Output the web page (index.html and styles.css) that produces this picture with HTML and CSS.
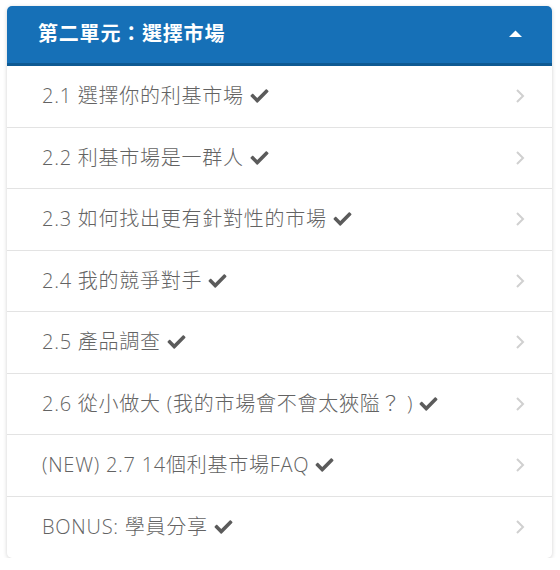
FILE: index.html
```html
<!DOCTYPE html>
<html lang="zh-Hant">
<head>
<meta charset="utf-8">
<link rel="stylesheet" href="styles.css">
</head>
<body>
<div class="card">
  <div class="header">
    <span class="title">第二單元：選擇市場</span>
    <svg class="caret" width="13" height="7" viewBox="0 0 13 7"><path d="M0 7 L6.5 0.5 L13 7 Z" fill="#fff"/></svg>
  </div>
  <ul class="list">
    <li class="row"><span class="label">2.1 選擇你的利基市場</span><svg class="check" viewBox="0 0 512 512"><path d="M173.9 439.4l-166.4-166.4c-10-10-10-26.2 0-36.2l36.2-36.2c10-10 26.2-10 36.2 0L192 312.7 432.1 72.6c10-10 26.2-10 36.2 0l36.2 36.2c10 10 10 26.2 0 36.2l-294.4 294.4c-10 10-26.2 10-36.2 0z"/></svg><svg class="chev" viewBox="0 0 10 16"><path d="M2 2 L8 8 L2 14" fill="none" stroke="#d0d0d0" stroke-width="2"/></svg></li>
    <li class="row"><span class="label">2.2 利基市場是一群人</span><svg class="check" viewBox="0 0 512 512"><path d="M173.9 439.4l-166.4-166.4c-10-10-10-26.2 0-36.2l36.2-36.2c10-10 26.2-10 36.2 0L192 312.7 432.1 72.6c10-10 26.2-10 36.2 0l36.2 36.2c10 10 10 26.2 0 36.2l-294.4 294.4c-10 10-26.2 10-36.2 0z"/></svg><svg class="chev" viewBox="0 0 10 16"><path d="M2 2 L8 8 L2 14" fill="none" stroke="#d0d0d0" stroke-width="2"/></svg></li>
    <li class="row"><span class="label">2.3 如何找出更有針對性的市場</span><svg class="check" viewBox="0 0 512 512"><path d="M173.9 439.4l-166.4-166.4c-10-10-10-26.2 0-36.2l36.2-36.2c10-10 26.2-10 36.2 0L192 312.7 432.1 72.6c10-10 26.2-10 36.2 0l36.2 36.2c10 10 10 26.2 0 36.2l-294.4 294.4c-10 10-26.2 10-36.2 0z"/></svg><svg class="chev" viewBox="0 0 10 16"><path d="M2 2 L8 8 L2 14" fill="none" stroke="#d0d0d0" stroke-width="2"/></svg></li>
    <li class="row"><span class="label">2.4 我的競爭對手</span><svg class="check" viewBox="0 0 512 512"><path d="M173.9 439.4l-166.4-166.4c-10-10-10-26.2 0-36.2l36.2-36.2c10-10 26.2-10 36.2 0L192 312.7 432.1 72.6c10-10 26.2-10 36.2 0l36.2 36.2c10 10 10 26.2 0 36.2l-294.4 294.4c-10 10-26.2 10-36.2 0z"/></svg><svg class="chev" viewBox="0 0 10 16"><path d="M2 2 L8 8 L2 14" fill="none" stroke="#d0d0d0" stroke-width="2"/></svg></li>
    <li class="row"><span class="label">2.5 產品調查</span><svg class="check" viewBox="0 0 512 512"><path d="M173.9 439.4l-166.4-166.4c-10-10-10-26.2 0-36.2l36.2-36.2c10-10 26.2-10 36.2 0L192 312.7 432.1 72.6c10-10 26.2-10 36.2 0l36.2 36.2c10 10 10 26.2 0 36.2l-294.4 294.4c-10 10-26.2 10-36.2 0z"/></svg><svg class="chev" viewBox="0 0 10 16"><path d="M2 2 L8 8 L2 14" fill="none" stroke="#d0d0d0" stroke-width="2"/></svg></li>
    <li class="row"><span class="label">2.6 從小做大 (我的市場會不會太狹隘？ )</span><svg class="check" viewBox="0 0 512 512"><path d="M173.9 439.4l-166.4-166.4c-10-10-10-26.2 0-36.2l36.2-36.2c10-10 26.2-10 36.2 0L192 312.7 432.1 72.6c10-10 26.2-10 36.2 0l36.2 36.2c10 10 10 26.2 0 36.2l-294.4 294.4c-10 10-26.2 10-36.2 0z"/></svg><svg class="chev" viewBox="0 0 10 16"><path d="M2 2 L8 8 L2 14" fill="none" stroke="#d0d0d0" stroke-width="2"/></svg></li>
    <li class="row"><span class="label">(NEW) 2.7 14個利基市場FAQ</span><svg class="check" viewBox="0 0 512 512"><path d="M173.9 439.4l-166.4-166.4c-10-10-10-26.2 0-36.2l36.2-36.2c10-10 26.2-10 36.2 0L192 312.7 432.1 72.6c10-10 26.2-10 36.2 0l36.2 36.2c10 10 10 26.2 0 36.2l-294.4 294.4c-10 10-26.2 10-36.2 0z"/></svg><svg class="chev" viewBox="0 0 10 16"><path d="M2 2 L8 8 L2 14" fill="none" stroke="#d0d0d0" stroke-width="2"/></svg></li>
    <li class="row"><span class="label">BONUS: 學員分享</span><svg class="check" viewBox="0 0 512 512"><path d="M173.9 439.4l-166.4-166.4c-10-10-10-26.2 0-36.2l36.2-36.2c10-10 26.2-10 36.2 0L192 312.7 432.1 72.6c10-10 26.2-10 36.2 0l36.2 36.2c10 10 10 26.2 0 36.2l-294.4 294.4c-10 10-26.2 10-36.2 0z"/></svg><svg class="chev" viewBox="0 0 10 16"><path d="M2 2 L8 8 L2 14" fill="none" stroke="#d0d0d0" stroke-width="2"/></svg></li>
  </ul>
</div>
</body>
</html>
```
FILE: styles.css
```css
html, body {
  margin: 0;
  padding: 0;
  background: #ffffff;
}
body {
  padding: 6px 8px 0 7px;
  font-family: "Open Sans", "Noto Sans CJK TC", sans-serif;
}
.card {
  background: #fff;
  border-radius: 5px;
  box-shadow: 0 1px 4px rgba(0, 0, 0, 0.18);
  overflow: hidden;
}
.header {
  height: 60px;
  box-sizing: border-box;
  background: #1670b7;
  border-bottom: 3px solid #0e5a93;
  display: flex;
  align-items: center;
  justify-content: space-between;
  padding: 0 30px 2px 31px;
}
.title {
  color: #fff;
  font-weight: 700;
  font-size: 20px;
  line-height: 1;
  letter-spacing: 0.8px;
}
.caret {
  display: block;
}
.list {
  list-style: none;
  margin: 0;
  padding: 0;
}
.row {
  height: 61.5px;
  box-sizing: border-box;
  display: flex;
  align-items: center;
  padding: 0 27px 0 35px;
  border-bottom: 1px solid #e3e3e3;
  color: #636363;
  font-size: 20px;
  font-weight: 300;
}
.row:last-child {
  border-bottom: none;
}
.label {
  line-height: 1;
  letter-spacing: 0.75px;
}
.check {
  width: 21px;
  height: 18px;
  margin-left: 5px;
  fill: #5b5b5b;
  flex: none;
}
.chev {
  width: 10px;
  height: 16px;
  margin-left: auto;
  flex: none;
}
```
